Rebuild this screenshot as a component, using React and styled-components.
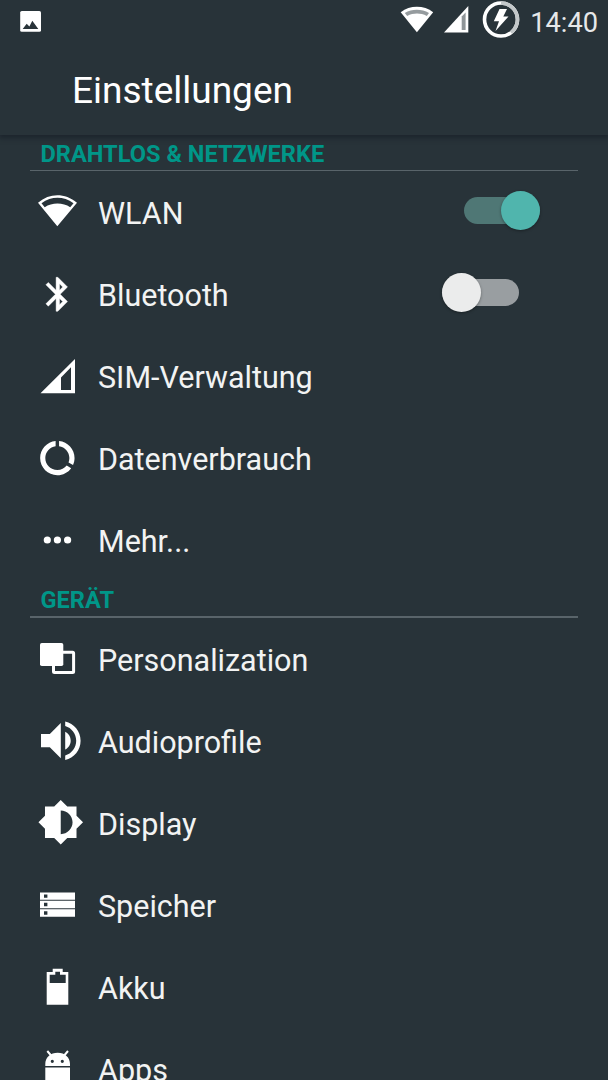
import React, { useState } from 'react'
import styled, { createGlobalStyle } from 'styled-components'

const Theme = {
	colorBackground: '#283339',
	colorAccent: '#009688',
	colorDivider: '#59646a',
	colorText: '#f2f3f3',
	colorIcon: '#ffffff',
}

const GlobalStyle = createGlobalStyle`
	* {
		box-sizing: border-box;
	}
	body {
		margin: 0;
		overflow: hidden;
		background: ${Theme.colorBackground};
	}
`

const Screen = styled.div`
	width: 608px;
	height: 1080px;
	overflow: hidden;
	display: flex;
	flex-direction: column;
	background: ${Theme.colorBackground};
	font-family: Roboto, 'Liberation Sans', sans-serif;
	color: ${Theme.colorText};
`

const Header = styled.header`
	flex: none;
	height: 135px;
	box-shadow: 0 2px 5px 1px rgba(20, 26, 36, 0.6);
	background: ${Theme.colorBackground};
`

const StatusBar = styled.div`
	height: 43px;
	padding: 0 10px 0 20px;
	display: flex;
	justify-content: space-between;
`

const StatusIcons = styled.div`
	display: flex;
`

const Clock = styled.time`
	width: 68px;
	margin-left: 8px;
	font-size: 27.2px;
	line-height: 46px;
	text-align: right;
	white-space: nowrap;
	color: #e6e8e9;
`

const Title = styled.h1`
	margin: 0;
	padding-left: 72px;
	font-size: 37px;
	font-weight: 400;
	line-height: 96px;
	color: #ffffff;
`

const List = styled.main`
	flex: 1;
	min-height: 0;
`

const SectionTitle = styled.h2`
	height: ${(props) => (props.$first ? 36 : 37)}px;
	margin: 0 30px;
	padding-left: 10.5px;
	display: flex;
	align-items: flex-end;
	border-bottom: ${(props) => (props.$first ? 1 : 2)}px solid
		${Theme.colorDivider};
	font-size: 23.6px;
	font-weight: 700;
	line-height: 32px;
	color: ${Theme.colorAccent};
`

const Row = styled.div`
	height: 82px;
	padding-left: 32px;
	display: flex;
	align-items: center;
	cursor: pointer;
`

const RowIcon = styled.svg`
	flex: none;
	width: 52px;
	height: 50px;
	overflow: visible;
	fill: ${Theme.colorIcon};
`

const Label = styled.span`
	flex: 1;
	padding: 3px 0 0 14px;
	font-size: 30.5px;
	line-height: 36px;
`

const Switch = styled.button`
	width: ${(props) => (props.$on ? 76 : 77)}px;
	height: 39px;
	margin: 0 ${(props) => (props.$on ? 68 : 89)}px 3px 0;
	padding: 0;
	border: none;
	display: flex;
	align-items: center;
	background: none;
	cursor: pointer;
`

const Track = styled.span`
	width: 100%;
	height: 27px;
	display: flex;
	align-items: center;
	justify-content: ${(props) => (props.$on ? 'flex-end' : 'flex-start')};
	border-radius: 14px;
	background: ${(props) => (props.$on ? '#4f7775' : '#999ea1')};
`

const Thumb = styled.span`
	flex: none;
	width: 39px;
	height: 39px;
	border-radius: 50%;
	background: ${(props) => (props.$on ? '#50b5ad' : '#ebecec')};
	box-shadow: 0 1px 3px rgba(0, 0, 0, 0.35);
`

const WifiIcon = () => (
	<RowIcon viewBox="0 0 52 50">
		<path
			fillRule="evenodd"
			d="M6 15.7C12 10.8 18.5 8.3 25.3 8.3S39 10.8 45 15.7L25.3 39.3ZM9.5 16.2L12.7 20.2C20 15.2 31 15.2 38.2 20.2L41.5 16.2C31.5 9 19.5 9 9.5 16.2Z"
		/>
	</RowIcon>
)

const BluetoothIcon = () => (
	<RowIcon viewBox="0 0 52 50">
		<path
			transform="translate(5.4 4.9) scale(1.7)"
			stroke="#fff"
			strokeWidth="0.25"
			d="M17.71 7.71L12 2h-1v7.59L6.41 5 5 6.41 10.59 12 5 17.59 6.41 19 11 14.41V22h1l5.71-5.71-4.3-4.29 4.3-4.29zM13 5.83l1.88 1.88L13 9.59V5.83zm1.88 10.46L13 18.17v-3.76l1.88 1.88z"
		/>
	</RowIcon>
)

const SimIcon = () => (
	<RowIcon viewBox="0 0 52 50">
		<path fillRule="evenodd" d="M8.5 42.3L43 8V42.3ZM29 26.5V39H39V16.3Z" />
	</RowIcon>
)

const DataIcon = () => (
	<RowIcon viewBox="0 0 52 50">
		<path
			transform="translate(4.7 4.4) scale(1.72)"
			d="M13 2.05v3.03c3.39.49 6 3.39 6 6.92 0 .9-.18 1.75-.48 2.54l2.6 1.53c.56-1.24.88-2.62.88-4.07 0-5.18-3.95-9.45-9-9.95zM12 19c-3.87 0-7-3.13-7-7 0-3.53 2.61-6.43 6-6.92V2.05c-5.06.5-9 4.76-9 9.95 0 5.52 4.47 10 9.99 10 3.31 0 6.24-1.61 8.06-4.09l-2.6-1.53C16.17 17.98 14.21 19 12 19z"
		/>
	</RowIcon>
)

const MoreIcon = () => (
	<RowIcon viewBox="0 0 52 50">
		<circle cx="15.3" cy="25" r="3.6" />
		<circle cx="25.4" cy="25" r="3.6" />
		<circle cx="35.6" cy="25" r="3.6" />
	</RowIcon>
)

const PersonalizationIcon = () => (
	<RowIcon viewBox="0 0 52 50">
		<rect x="8" y="9" width="23.3" height="23" rx="1.8" />
		<rect
			x="21.5"
			y="18.2"
			width="20.1"
			height="20.3"
			rx="1"
			fill="none"
			stroke="#fff"
			strokeWidth="3"
		/>
	</RowIcon>
)

const AudioIcon = () => (
	<RowIcon viewBox="0 0 52 50">
		<path
			transform="translate(2.4 -1.7) scale(2.2)"
			d="M3 9v6h4l5 5V4L7 9H3zm13.5 3c0-1.77-1.02-3.29-2.5-4.03v8.05c1.48-.73 2.5-2.25 2.5-4.02zM14 3.23v2.06c2.89.86 5 3.54 5 6.71s-2.11 5.85-5 6.71v2.06c4.01-.91 7-4.49 7-8.77s-2.99-7.86-7-8.77z"
		/>
	</RowIcon>
)

const DisplayIcon = () => (
	<RowIcon viewBox="0 0 52 50">
		<path
			transform="translate(5.1 0.7) scale(1.97)"
			d="M20 15.31L23.31 12 20 8.69V4h-4.69L12 .69 8.69 4H4v4.69L.69 12 4 15.31V20h4.69L12 23.31 15.31 20H20v-4.69zM12 18V6c3.31 0 6 2.69 6 6s-2.69 6-6 6z"
		/>
	</RowIcon>
)

const StorageIcon = () => (
	<RowIcon viewBox="0 0 52 50">
		{[12.4, 20.8, 29.3].map((y) => (
			<path
				key={y}
				fillRule="evenodd"
				d={`M8 ${y}h35v7.4h-35zM12 ${y + 2}v3.4h3.4v-3.4z`}
			/>
		))}
	</RowIcon>
)

const BatteryIcon = () => (
	<RowIcon viewBox="0 0 52 50">
		<path
			fillRule="evenodd"
			d="M20.7 6.7H30.7V10H36.3V42.7H14.7V10H20.7ZM23.3 9.7V12.8H17.7V21H33.7V12.8H28V9.7Z"
		/>
	</RowIcon>
)

const AppsIcon = () => (
	<RowIcon viewBox="0 0 52 50">
		<path d="M15.3 7L19.5 12M36 7L31.8 12" stroke="#fff" strokeWidth="2" />
		<path
			fillRule="evenodd"
			d="M13.3 22V20C13.3 13.5 18.5 8.7 25.7 8.7S38 13.5 38 20V22ZM18.7 17.3a1.6 1.6 0 1 0 3.2 0a1.6 1.6 0 1 0 -3.2 0ZM28.7 17.3a1.6 1.6 0 1 0 3.2 0a1.6 1.6 0 1 0 -3.2 0Z"
		/>
		<path d="M13.3 23.4H38V38a4 4 0 0 1-4 4H17.3a4 4 0 0 1-4-4Z" />
	</RowIcon>
)

const PictureGlyph = () => (
	<svg width="24" height="43" viewBox="20 0 24 43">
		<rect x="20.2" y="11" width="20.8" height="20.8" rx="1.6" fill="#fff" />
		<path
			d="M22.7 29L26.7 23.7L29.4 26.5L32.3 20.7L38.3 29Z"
			fill={Theme.colorBackground}
		/>
	</svg>
)

const StatusGlyphs = () => (
	<svg width="122" height="43" viewBox="400 0 122 43">
		<path
			d="M400.7 12.2C405.5 8.5 411 6.7 416.9 6.7S428.5 8.5 433.2 12.2L416.9 32.3Z"
			fill="#fff"
		/>
		<path
			d="M404.8 13C412 8.6 421.5 8.6 429 13L426.8 16C420.5 12.8 413.5 12.8 407.2 16Z"
			fill="#959b9e"
		/>
		<path d="M444 32.6L468.3 6V32.6Z" fill="#fff" />
		<path d="M461.7 16.5L465.6 12.5V30H461.7Z" fill="#8f9598" />
		<circle
			cx="501"
			cy="19.5"
			r="16.5"
			fill="none"
			stroke="#fff"
			strokeWidth="3.6"
		/>
		<path
			d="M501 3A16.5 16.5 0 0 1 511 32.6"
			fill="none"
			stroke="#c3c8ca"
			strokeWidth="3.6"
		/>
		<path
			d="M499.5 9H507L503.3 16.5H508.5L495.5 31L499 21.3H493.8Z"
			fill="#fff"
		/>
	</svg>
)

const sections = [
	{
		title: 'DRAHTLOS & NETZWERKE',
		items: [
			{ label: 'WLAN', icon: WifiIcon, toggle: 'wlan' },
			{ label: 'Bluetooth', icon: BluetoothIcon, toggle: 'bluetooth' },
			{ label: 'SIM-Verwaltung', icon: SimIcon },
			{ label: 'Datenverbrauch', icon: DataIcon },
			{ label: 'Mehr...', icon: MoreIcon },
		],
	},
	{
		title: 'GERÄT',
		items: [
			{ label: 'Personalization', icon: PersonalizationIcon },
			{ label: 'Audioprofile', icon: AudioIcon },
			{ label: 'Display', icon: DisplayIcon },
			{ label: 'Speicher', icon: StorageIcon },
			{ label: 'Akku', icon: BatteryIcon },
			{ label: 'Apps', icon: AppsIcon },
		],
	},
]

const App = () => {
	const [toggles, setToggles] = useState({ wlan: true, bluetooth: false })

	const handleToggle = (name) => {
		setToggles({ ...toggles, [name]: !toggles[name] })
	}

	return (
		<Screen>
			<GlobalStyle />
			<Header>
				<StatusBar>
					<PictureGlyph />
					<StatusIcons>
						<StatusGlyphs />
						<Clock>14:40</Clock>
					</StatusIcons>
				</StatusBar>
				<Title>Einstellungen</Title>
			</Header>
			<List>
				{sections.map((section, index) => (
					<section key={section.title}>
						<SectionTitle $first={index === 0}>{section.title}</SectionTitle>
						{section.items.map(({ label, icon: Icon, toggle }) => (
							<Row key={label}>
								<Icon />
								<Label>{label}</Label>
								{toggle && (
									<Switch
										$on={toggles[toggle]}
										aria-label={label}
										onClick={() => handleToggle(toggle)}
									>
										<Track $on={toggles[toggle]}>
											<Thumb $on={toggles[toggle]} />
										</Track>
									</Switch>
								)}
							</Row>
						))}
					</section>
				))}
			</List>
		</Screen>
	)
}

export default App
